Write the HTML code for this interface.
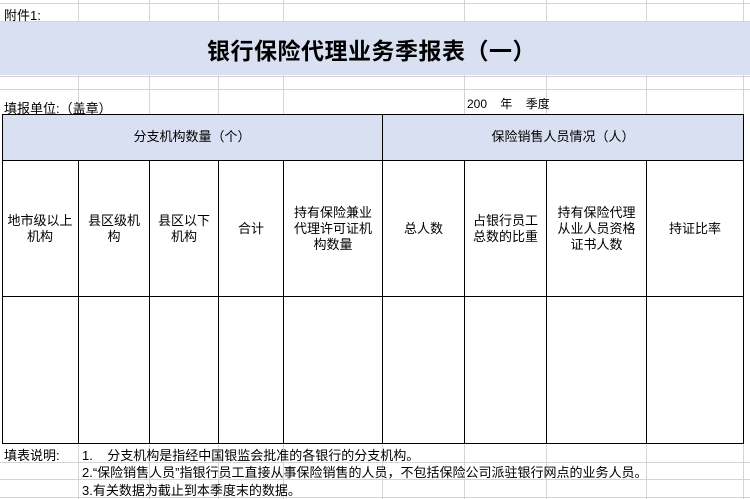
<!DOCTYPE html><html><head><meta charset="utf-8"><style>
body{margin:0;width:750px;height:499px;background:#fff;position:relative;overflow:hidden;font-family:"Liberation Sans","Noto Sans CJK SC","WenQuanYi Zen Hei",sans-serif;font-size:13px;color:#000}
.a{position:absolute}
.g{position:absolute;background:#d4d4d4}
.k{position:absolute;background:#000}
.c{position:absolute;display:flex;align-items:center;justify-content:center;text-align:center;line-height:16px}
</style></head><body>
<div class="g" style="left:0;top:3px;width:750px;height:1px"></div>
<div class="g" style="left:0;top:21px;width:750px;height:1px"></div>
<div class="g" style="left:0;top:76px;width:750px;height:1px"></div>
<div class="g" style="left:0;top:89px;width:750px;height:1px"></div>
<div class="g" style="left:0;top:462px;width:750px;height:1px"></div>
<div class="g" style="left:0;top:479px;width:750px;height:1px"></div>
<div class="g" style="left:0;top:497px;width:750px;height:1px"></div>
<div class="g" style="left:78px;top:0;width:1px;height:114px"></div>
<div class="g" style="left:149px;top:0;width:1px;height:114px"></div>
<div class="g" style="left:218px;top:0;width:1px;height:114px"></div>
<div class="g" style="left:283px;top:0;width:1px;height:114px"></div>
<div class="g" style="left:464px;top:0;width:1px;height:114px"></div>
<div class="g" style="left:546px;top:0;width:1px;height:114px"></div>
<div class="g" style="left:646px;top:0;width:1px;height:114px"></div>
<div class="g" style="left:743px;top:0;width:1px;height:114px"></div>
<div class="g" style="left:78px;top:443px;width:1px;height:56px"></div>
<div class="g" style="left:149px;top:443px;width:1px;height:56px"></div>
<div class="g" style="left:218px;top:443px;width:1px;height:56px"></div>
<div class="g" style="left:283px;top:443px;width:1px;height:56px"></div>
<div class="g" style="left:382px;top:443px;width:1px;height:56px"></div>
<div class="g" style="left:464px;top:443px;width:1px;height:56px"></div>
<div class="g" style="left:546px;top:443px;width:1px;height:56px"></div>
<div class="g" style="left:646px;top:443px;width:1px;height:56px"></div>
<div class="g" style="left:743px;top:443px;width:1px;height:56px"></div>
<div class="a" style="left:0;top:22px;width:750px;height:53px;background:#d9e0f1"></div>
<div class="a" style="left:4px;top:5px">附件1:</div>
<div class="c" style="left:0;top:24px;width:743px;height:53px;font-size:23px;font-weight:bold;letter-spacing:0.5px">银行保险代理业务季报表（一）</div>
<div class="a" style="left:4px;top:98px">填报单位:（盖章）</div>
<div class="a" style="left:467px;top:95px;font-size:12px">200&nbsp;&nbsp;&nbsp; 年&nbsp;&nbsp;&nbsp; 季度</div>
<div class="a" style="left:2px;top:114px;width:741px;height:46px;background:#d9e0f1"></div>
<div class="k" style="left:2px;top:114px;width:742px;height:1px"></div>
<div class="k" style="left:2px;top:160px;width:742px;height:1px"></div>
<div class="k" style="left:2px;top:296px;width:742px;height:1px"></div>
<div class="k" style="left:2px;top:443px;width:742px;height:1px"></div>
<div class="k" style="left:2px;top:114px;width:1px;height:330px"></div>
<div class="k" style="left:743px;top:114px;width:1px;height:330px"></div>
<div class="k" style="left:382px;top:114px;width:1px;height:330px"></div>
<div class="k" style="left:78px;top:160px;width:1px;height:284px"></div>
<div class="k" style="left:149px;top:160px;width:1px;height:284px"></div>
<div class="k" style="left:218px;top:160px;width:1px;height:284px"></div>
<div class="k" style="left:283px;top:160px;width:1px;height:284px"></div>
<div class="k" style="left:464px;top:160px;width:1px;height:284px"></div>
<div class="k" style="left:546px;top:160px;width:1px;height:284px"></div>
<div class="k" style="left:646px;top:160px;width:1px;height:284px"></div>
<div class="c" style="left:2px;top:114px;width:380px;height:46px">分支机构数量（个）</div>
<div class="c" style="left:383px;top:114px;width:360px;height:46px">保险销售人员情况（人）</div>
<div class="c" style="left:2px;top:161px;width:76px;height:135px">地市级以上<br>机构</div>
<div class="c" style="left:79px;top:161px;width:70px;height:135px">县区级机<br>构</div>
<div class="c" style="left:150px;top:161px;width:68px;height:135px">县区以下<br>机构</div>
<div class="c" style="left:219px;top:161px;width:64px;height:135px">合计</div>
<div class="c" style="left:284px;top:161px;width:98px;height:135px">持有保险兼业<br>代理许可证机<br>构数量</div>
<div class="c" style="left:383px;top:161px;width:81px;height:135px">总人数</div>
<div class="c" style="left:465px;top:161px;width:81px;height:135px">占银行员工<br>总数的比重</div>
<div class="c" style="left:547px;top:161px;width:99px;height:135px">持有保险代理<br>从业人员资格<br>证书人数</div>
<div class="c" style="left:647px;top:161px;width:96px;height:135px">持证比率</div>
<div class="a" style="left:4px;top:445px;font-size:13px">填表说明:</div>
<div class="a" style="left:82px;top:445px;font-size:13px">1.&nbsp;&nbsp;&nbsp; 分支机构是指经中国银监会批准的各银行的分支机构。</div>
<div class="a" style="left:82px;top:462px;font-size:13px">2.“保险销售人员”指银行员工直接从事保险销售的人员，不包括保险公司派驻银行网点的业务人员。</div>
<div class="a" style="left:82px;top:480px;font-size:13px">3.有关数据为截止到本季度末的数据。</div>
</body></html>
